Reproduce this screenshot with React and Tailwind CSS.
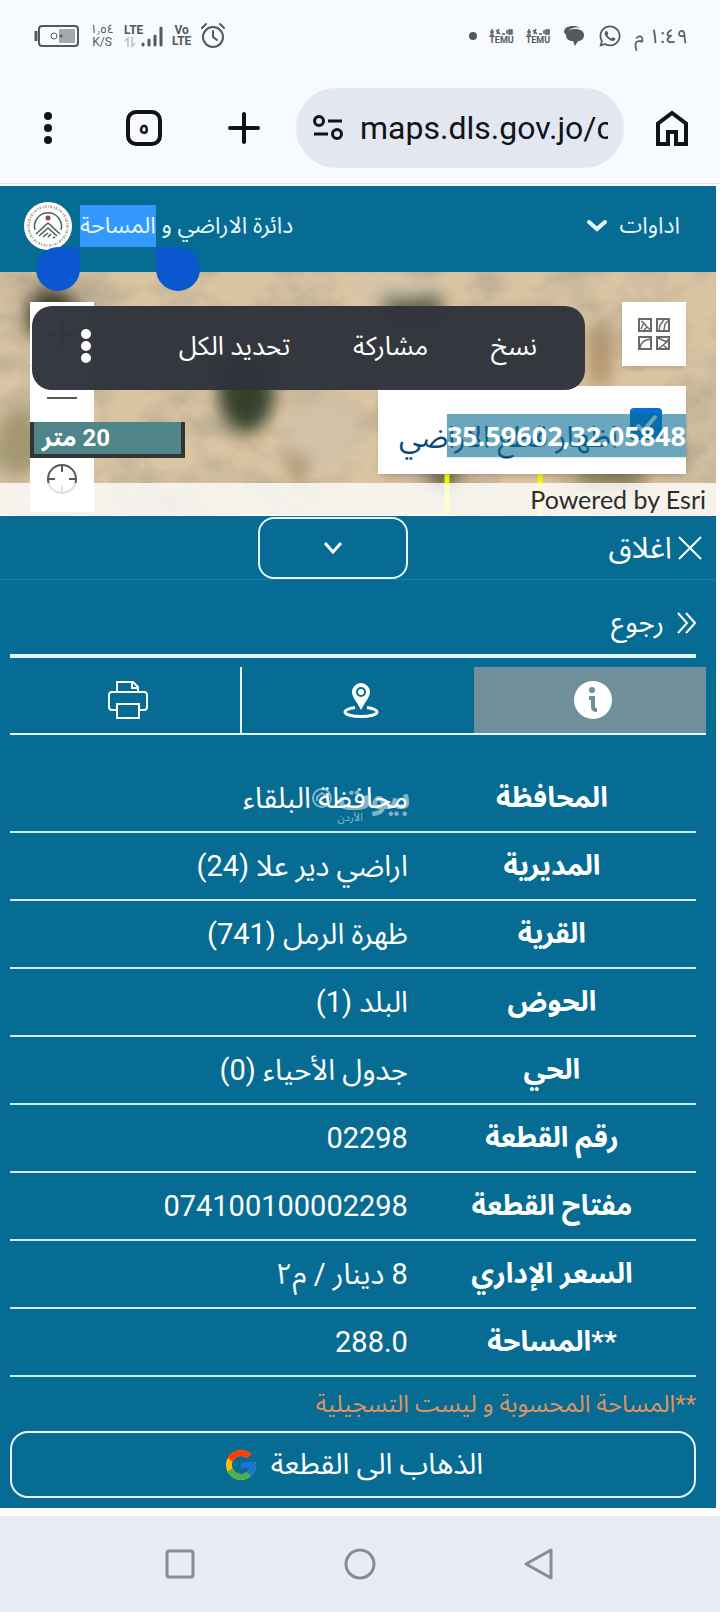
import { useState } from 'react'
import { FcGoogle } from 'react-icons/fc'
import { FaWhatsapp } from 'react-icons/fa'

const details = [
  { label: 'المحافظة', value: 'محافظة البلقاء' },
  { label: 'المديرية', value: 'اراضي دير علا (24)' },
  { label: 'القرية', value: 'ظهرة الرمل (741)' },
  { label: 'الحوض', value: 'البلد (1)' },
  { label: 'الحي', value: 'جدول الأحياء (0)' },
  { label: 'رقم القطعة', value: '02298' },
  { label: 'مفتاح القطعة', value: '074100100002298' },
  { label: 'السعر الإداري', value: '8 دينار / م٢' },
  { label: '**المساحة', value: '288.0' },
]

function Temu() {
  return (
    <div className="flex flex-col items-center">
      <svg className="h-2 w-6" viewBox="0 0 24 8" fill="none" stroke="currentColor" strokeWidth="1.5">
        <path d="M1 7h4M3 1v5M1 4h4M7 2l4 4M8 6l2-5M13 6h3M18 2v4M20 2h3v4h-3zM20 4h3" />
      </svg>
      <span className="text-[9px] leading-[9px] font-bold">TEMU</span>
    </div>
  )
}

function StatusBar() {
  return (
    <div className="flex h-[72px] items-center justify-between px-8 text-[#55585c] font-['Roboto','Noto_Sans_Arabic','DejaVu_Sans',sans-serif]">
      <div className="flex items-center gap-2">
        <svg className="h-6 w-12" viewBox="0 0 48 24" fill="none">
          <rect x="7" y="2" width="39" height="20" rx="3" stroke="currentColor" strokeWidth="2" />
          <path d="M4 7v10" stroke="currentColor" strokeWidth="3" />
          <rect x="27" y="5" width="16" height="14" fill="#a5a7aa" />
          <circle cx="22" cy="12" r="3" stroke="currentColor" />
          <circle cx="29" cy="12" r="1.5" fill="currentColor" />
        </svg>
        <div className="flex w-7 flex-col items-center text-[12px] leading-[13px]">
          <span>١٫٥٤</span>
          <span>K/S</span>
        </div>
        <div className="flex items-end">
          <div className="flex w-4 flex-col">
            <span className="text-[12px] leading-3 font-bold">LTE</span>
            <svg className="h-3 w-3" viewBox="0 0 12 12" fill="none" stroke="#b9bbbe" strokeWidth="1.5">
              <path d="M4 11V2L1 5M8 1v9l3-3" />
            </svg>
          </div>
          <svg className="h-6 w-6" viewBox="0 0 24 24" stroke="currentColor" strokeWidth="3" strokeLinecap="round">
            <path d="M3 21v-1M9 21v-5M15 21v-9M21 21V4" />
          </svg>
        </div>
        <div className="flex flex-col items-center text-[12px] leading-[11px] font-bold">
          <span>Vo</span>
          <span>LTE</span>
        </div>
        <svg className="h-7 w-7" viewBox="0 0 28 28" fill="none" stroke="currentColor" strokeWidth="2" strokeLinecap="round">
          <circle cx="14" cy="15" r="10" />
          <path d="M14 9v6l4 3M3 6l4-4M25 6l-4-4" />
        </svg>
      </div>

      <div className="flex items-center gap-3">
        <span className="size-2 rounded-full bg-[#55585c]" />
        <Temu />
        <Temu />
        <svg className="size-6" viewBox="0 0 24 24" fill="currentColor">
          <path d="M2 8c0-4 4-6 9-6 3 0 5 .6 7 2-6-1.500-12 .5-13 7-2-.8-3-2-3-3z" />
          <path d="M4 11c0-4 4-6 9-6s9 2 9 6-3 6-6 6l-3 5-2-5c-4 0-7-2-7-6z" />
        </svg>
        <FaWhatsapp className="size-6" />
        <span className="text-[20px] leading-6" dir="rtl">١:٤٩ م</span>
      </div>
    </div>
  )
}

function BrowserBar() {
  return (
    <div className="flex h-[112px] items-center border-b border-[#dfe6ec] pr-8 pl-10 text-[#111318]">
      <button aria-label="menu" className="flex h-10 w-4 items-center justify-center">
        <svg className="h-9 w-3" viewBox="0 0 12 36" fill="currentColor">
          <circle cx="6" cy="6" r="4" />
          <circle cx="6" cy="18" r="4" />
          <circle cx="6" cy="30" r="4" />
        </svg>
      </button>
      <button aria-label="tabs" className="ml-[70px] flex size-9 items-center justify-center rounded-[10px] border-4 border-[#111318] text-[18px] leading-none font-bold font-['Noto_Sans_Arabic','DejaVu_Sans',sans-serif]">
        ٥
      </button>
      <button aria-label="new tab" className="ml-[66px]">
        <svg className="size-8" viewBox="0 0 32 32" stroke="currentColor" strokeWidth="4" strokeLinecap="round">
          <path d="M16 2v28M2 16h28" />
        </svg>
      </button>
      <div className="mx-8 ml-9 flex h-20 min-w-0 flex-1 items-center gap-4 rounded-full bg-[#e2e7f1] px-4">
        <svg className="h-8 w-8 shrink-0" viewBox="0 0 32 32" fill="none" stroke="currentColor" strokeWidth="3">
          <circle cx="7" cy="9" r="4.5" />
          <path d="M16 9h14M2 22h14" />
          <circle cx="25" cy="22" r="4.5" />
        </svg>
        <input
          aria-label="address"
          readOnly
          defaultValue="maps.dls.gov.jo/c"
          className="w-full min-w-0 bg-transparent text-[32px] leading-10 outline-none font-['Roboto',sans-serif]"
        />
      </div>
      <button aria-label="home">
        <svg className="h-9 w-8" viewBox="0 0 32 36" fill="none" stroke="currentColor" strokeWidth="4">
          <path d="M2 34V13.500L16 3l14 10.500V34H20V22h-8v12z" />
        </svg>
      </button>
    </div>
  )
}

function Header() {
  return (
    <header className="relative z-20 flex h-[86px] items-center justify-between bg-[#066c93] pr-9 pb-[6px] pl-6 text-[23px] text-[#e3f6fb]">
      <div className="flex items-center gap-2">
        <svg className="size-12" viewBox="0 0 48 48" fill="none">
          <circle cx="24" cy="24" r="24" fill="#fff" />
          <circle cx="24" cy="24" r="19.500" stroke="#b5aca2" strokeWidth="2.5" strokeDasharray="2 1.5 1 1" />
          <path d="M11 28a13.500 13.500 0 1 1 26 0" stroke="#3d6b60" strokeWidth="1.5" />
          <circle cx="24" cy="16" r="2.5" fill="#8b4a3a" />
          <path d="M12 32l12-11 12 11M15 34l9-8 9 8M19 35l5-4M24 35l3-3M29 36l2-1" stroke="#4a5a58" strokeWidth="1.5" />
        </svg>
        <p dir="rtl" className="leading-[42px] whitespace-nowrap">
          دائرة الاراضي و{' '}
          <span className="relative inline-block bg-[#3399ff]">
            المساحة
            <span className="absolute top-full right-full size-11 rounded-full rounded-tr-none bg-[#0b57d0]" />
            <span className="absolute top-full left-full size-11 rounded-full rounded-tl-none bg-[#0b57d0]" />
          </span>
        </p>
      </div>
      <button dir="rtl" className="flex items-center gap-3">
        اداوات
        <svg className="h-3 w-5" viewBox="0 0 20 12" fill="none" stroke="currentColor" strokeWidth="4" strokeLinecap="round">
          <path d="M2 2l8 7 8-7" />
        </svg>
      </button>
    </header>
  )
}

function Terrain() {
  return (
    <svg className="absolute inset-0 size-full" viewBox="0 0 716 244" preserveAspectRatio="xMidYMid slice">
      <defs>
        <filter id="soil" x="0" y="0" width="100%" height="100%">
          <feTurbulence type="fractalNoise" baseFrequency="0.018 0.024" numOctaves="4" seed="8" />
          <feColorMatrix values="0 0 0 0 .45  0 0 0 0 .38  0 0 0 0 .27  2 0 0 0 -.75" />
        </filter>
        <filter id="soft" x="-50%" y="-50%" width="200%" height="200%">
          <feGaussianBlur stdDeviation="9" />
        </filter>
      </defs>
      <rect width="716" height="244" fill="#dac5a3" />
      <rect width="716" height="244" filter="url(#soil)" />
      <g filter="url(#soft)">
        <ellipse cx="52" cy="45" rx="26" ry="28" fill="#3a3a25" />
        <ellipse cx="20" cy="170" rx="24" ry="34" fill="#a39770" />
        <ellipse cx="412" cy="32" rx="32" ry="14" fill="#3a3c28" />
        <ellipse cx="400" cy="18" rx="40" ry="8" fill="#cfc6ae" />
        <ellipse cx="246" cy="120" rx="28" ry="42" fill="#34402c" />
        <ellipse cx="325" cy="160" rx="36" ry="34" fill="#d3c2a8" />
        <ellipse cx="600" cy="85" rx="12" ry="34" fill="#b0906a" />
        <ellipse cx="445" cy="208" rx="16" ry="9" fill="#4a3d25" />
        <ellipse cx="610" cy="206" rx="40" ry="8" fill="#6e6240" />
        <ellipse cx="298" cy="195" rx="10" ry="12" fill="#9b8260" />
      </g>
      <path d="M447 190v54M540 190v54" stroke="#e8ff00" strokeWidth="5" />
    </svg>
  )
}

function MapView() {
  const [checked, setChecked] = useState(true)

  return (
    <section className="relative z-10 h-[244px] border-b border-white">
      <div className="absolute inset-0 overflow-hidden bg-[#dac5a3]">
        <Terrain />
      </div>

      {/* zoom and locate */}
      <div className="absolute top-[30px] left-[30px] flex w-16 flex-col bg-white text-[#55585c]">
        <button aria-label="zoom in" className="flex h-16 items-center justify-center border-b border-[#d5d5d5]">
          <svg className="size-8" viewBox="0 0 32 32" stroke="currentColor" strokeWidth="2"><path d="M16 1v30M1 16h30" /></svg>
        </button>
        <button aria-label="zoom out" className="flex h-16 items-center justify-center">
          <svg className="size-8" viewBox="0 0 32 32" stroke="currentColor" strokeWidth="2"><path d="M1 16h30" /></svg>
        </button>
        <button aria-label="locate" className="mt-4 flex h-[66px] items-center justify-center">
          <svg className="size-8" viewBox="0 0 32 32" fill="none" stroke="currentColor" strokeWidth="2">
            <circle cx="16" cy="16" r="14" />
            <path d="M16 2v7M16 23v7M2 16h7M23 16h7" />
          </svg>
        </button>
      </div>

      <button aria-label="basemap" className="absolute top-[30px] right-[30px] flex size-16 items-center justify-center bg-white text-[#6a6a6a] shadow-md">
        <svg className="size-9" viewBox="0 0 36 36" fill="none" stroke="currentColor" strokeWidth="2">
          <rect x="3" y="3" width="12" height="12" />
          <rect x="21" y="3" width="12" height="12" />
          <rect x="3" y="21" width="12" height="12" />
          <rect x="21" y="21" width="12" height="12" />
          <path d="M5 5l3 2 3 4 4 3M5 13l3-6M8 14l3-3M23 15l1-6 4-5M28 14l1-6 4-4M4 32c1-6 4-8 11-9M22 22l9 4-9 7M27 29l5 4M29 27l4-4" strokeWidth="1.5" />
        </svg>
      </button>

      {/* layer toggle */}
      <label dir="rtl" className="absolute top-[114px] right-[30px] flex h-[88px] w-[308px] items-center gap-3 bg-white pt-3 pr-6 text-[30px] text-[#0b4a75] shadow-md">
        <span className="relative -mt-6 size-8">
          <input
            type="checkbox"
            checked={checked}
            onChange={e => setChecked(e.target.checked)}
            className="block size-8 appearance-none rounded-[4px] bg-[#0a6fd0]"
          />
          <svg className="pointer-events-none absolute inset-0 size-8" viewBox="0 0 32 32" fill="none" stroke="#fff" strokeWidth="4">
            <path d="M7 17l6 6L26 8" />
          </svg>
        </span>
        <span className="whitespace-nowrap">اظهار قطع الاراضي</span>
      </label>
      <div className="absolute top-[142px] right-[30px] h-[43px] bg-[#066c93]/60 text-[27px] leading-[43px] font-bold text-white shadow-sm font-['Noto_Sans',sans-serif]">
        35.59602,32.05848
      </div>

      {/* scale bar */}
      <div dir="rtl" className="absolute top-[150px] left-[30px] flex h-9 w-[155px] items-center justify-end border-4 border-t-0 border-[#323436] bg-[#4f8488] pl-2 text-[24px] leading-8 font-bold text-white">
        20 متر
      </div>

      <div className="absolute inset-x-0 bottom-0 h-8 bg-white/80 pr-[10px] text-right text-[25px] leading-8 text-[#2c2c2c] font-['Lato',sans-serif]">
        Powered by Esri
      </div>

      {/* text selection menu */}
      <div className="absolute top-[34px] left-8 flex h-[84px] w-[553px] items-center justify-between rounded-[20px] bg-[#30333b]/97 px-12 pb-1 text-[26px] text-white">
        <button aria-label="more" className="pr-1">
          <svg className="h-9 w-3" viewBox="0 0 12 36" fill="currentColor">
            <circle cx="6" cy="6" r="5" />
            <circle cx="6" cy="18" r="5" />
            <circle cx="6" cy="30" r="5" />
          </svg>
        </button>
        <button className="ml-5">تحديد الكل</button>
        <button>مشاركة</button>
        <button>نسخ</button>
      </div>
    </section>
  )
}

function Tabs() {
  return (
    <div dir="rtl" className="mx-[10px] mt-[9px] grid h-[68px] grid-cols-3 border-b-2 border-[#e3f6fb] text-white">
      <button aria-label="info" className="flex items-center justify-center bg-[#708f9a] pl-[6px]">
        <svg className="size-10" viewBox="0 0 40 40">
          <circle cx="20" cy="20" r="19" fill="currentColor" />
          <circle cx="19" cy="10" r="3" fill="#708f9a" />
          <path d="M16 18h4v9q0 3 4 3" fill="none" stroke="#708f9a" strokeWidth="4" />
        </svg>
      </button>
      <button aria-label="location" className="flex items-center justify-center pl-[6px]">
        <svg className="size-9" viewBox="0 0 36 36" fill="none">
          <path d="M18 28C14 20 9 15 9 10a9 9 0 0 1 18 0c0 5-5 10-9 18z" fill="currentColor" />
          <circle cx="18" cy="10" r="4" stroke="#066c93" strokeWidth="2" />
          <path d="M12 25.500c-6 1-10 2.500-10 4.500 0 2.500 7 4.500 16 4.500s16-2 16-4.500c0-2-4-3.500-10-4.500" stroke="currentColor" strokeWidth="3" />
        </svg>
      </button>
      <button aria-label="print" className="flex items-center justify-center border-r-2 border-[#e3f6fb] pl-[6px]">
        <svg className="size-10" viewBox="0 0 40 40" fill="none" stroke="currentColor" strokeWidth="2">
          <path d="M9 12V2h16l5 5v5M24 2v6h6M9 30H4a3 3 0 0 1-3-3V15a3 3 0 0 1 3-3h32a3 3 0 0 1 3 3v12a3 3 0 0 1-3 3h-5" />
          <path d="M9 24h22v14H9z" />
        </svg>
      </button>
    </div>
  )
}

function ParcelPanel() {
  return (
    <main className="bg-[#066c93] pb-[10px] text-white">
      <div className="flex h-16 items-center justify-between border-b border-[#1c7ea3] pr-3 pl-[36%]">
        <button aria-label="collapse" className="flex h-[62px] w-[150px] items-center justify-center rounded-2xl border-2 border-[#e3f6fb]">
          <svg className="h-3 w-5" viewBox="0 0 20 12" fill="none" stroke="currentColor" strokeWidth="3">
            <path d="M2 1l8 9 8-9" />
          </svg>
        </button>
        <button dir="rtl" className="flex items-center gap-1 text-[30px]">
          <svg className="size-7" viewBox="0 0 28 28" stroke="currentColor" strokeWidth="2">
            <path d="M3 3l22 22M25 3L3 25" />
          </svg>
          اغلاق
        </button>
      </div>

      <div dir="rtl" className="mr-5 ml-[10px] flex h-[78px] items-center border-b-4 border-[#e3f6fb] pt-3 text-[28px]">
        <button className="flex items-center gap-3">
          <svg className="h-6 w-5" viewBox="0 0 20 24" fill="none" stroke="currentColor" strokeWidth="2">
            <path d="M2 2l9 10-9 10M10 2l9 10-9 10" />
          </svg>
          رجوع
        </button>
      </div>

      <Tabs />

      <div dir="rtl" className="relative mt-[29px] mr-5 ml-[10px]">
        <table className="w-full border-collapse">
          <tbody>
            {details.map(d => (
              <tr key={d.label} className="h-[68px] border-b-2 border-[#cfeaf3]">
                <th scope="row" className="w-[42%] text-center text-[28px] leading-10 font-bold">{d.label}</th>
                <td className="text-right text-[29px] leading-10">{d.value}</td>
              </tr>
            ))}
          </tbody>
        </table>
        {/* site watermark */}
        <div className="pointer-events-none absolute top-5 left-[300px] text-white/50">
          <div className="flex items-center gap-1 text-[32px] leading-7 font-bold">
            بيوت
            <svg className="size-6" viewBox="0 0 24 24" fill="none" stroke="currentColor" strokeWidth="2">
              <circle cx="12" cy="12" r="9" />
              <path d="M7 15v-4l5-4 5 4v4M10 16h4" />
            </svg>
          </div>
          <div className="pr-12 text-[11px] leading-3">الأردن</div>
        </div>
      </div>

      <p dir="rtl" className="mr-5 ml-[10px] py-2 text-[24px] leading-[38px] text-[#e0935f]">
        **المساحة المحسوبة و ليست التسجيلية
      </p>

      <div className="mr-5 ml-[10px]">
        <button dir="rtl" className="flex h-[67px] w-full items-center justify-center gap-3 rounded-[18px] border-2 border-[#e3f6fb] text-[29px]">
          الذهاب الى القطعة
          <FcGoogle className="size-9" />
        </button>
      </div>
    </main>
  )
}

function NavBar() {
  return (
    <nav className="grid h-24 grid-cols-3 items-center justify-items-center bg-[#e7ecf5] px-[12.5%] text-[#8a8c93]">
      <button aria-label="recents">
        <svg className="size-8" viewBox="0 0 32 32" fill="none" stroke="currentColor" strokeWidth="3">
          <rect x="3" y="3" width="26" height="26" rx="2" />
        </svg>
      </button>
      <button aria-label="home screen">
        <svg className="size-8" viewBox="0 0 32 32" fill="none" stroke="currentColor" strokeWidth="3">
          <circle cx="16" cy="16" r="14" />
        </svg>
      </button>
      <button aria-label="back">
        <svg className="size-8" viewBox="0 0 32 32" fill="none" stroke="currentColor" strokeWidth="3" strokeLinejoin="round">
          <path d="M27 2v28L2 16z" />
        </svg>
      </button>
    </nav>
  )
}

export default function App() {
  return (
    <div className="bg-[#f7faff]">
      <StatusBar />
      <BrowserBar />
      <div className="bg-white pt-[2px] pr-1 pb-2 font-['Roboto','Noto_Sans_Arabic','DejaVu_Sans',sans-serif]">
        <Header />
        <MapView />
        <ParcelPanel />
      </div>
      <NavBar />
    </div>
  )
}
